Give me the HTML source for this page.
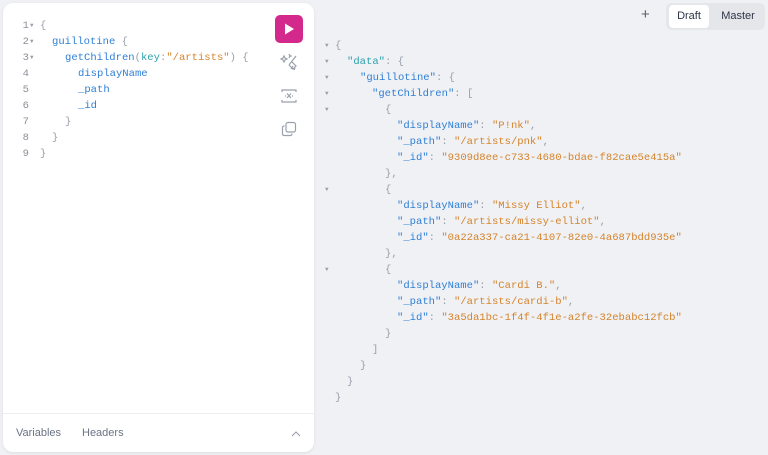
<!DOCTYPE html>
<html><head><style>
*{margin:0;padding:0;box-sizing:border-box}
body{width:768px;height:455px;background:#f0f1f4;font-family:"Liberation Sans",sans-serif;position:relative;overflow:hidden}
.panel{position:absolute;left:3px;top:3px;width:311px;height:449px;background:#fff;border-radius:10px;box-shadow:0 1px 3px rgba(0,0,0,.08)}
.code{position:absolute;font-family:"Liberation Mono",monospace;font-size:10.55px;line-height:16px;white-space:pre}
.l{position:absolute;left:0}
.n{color:#8a8f9a;position:absolute;text-align:right;width:12px}
.a{color:#9aa0ab;font-size:6px;position:absolute}
.p{color:#9aa0ab}
.f{color:#2f7fd5}
.k{color:#2aa1ad}
.s{color:#d4842c}
.foot{position:absolute;left:0;right:0;top:410px;border-top:1px solid #eceef1}
.foot span{position:absolute;top:13px;font-size:11px;color:#6b7385}
.run{position:absolute;left:272px;top:12px;width:28px;height:28px;background:#d3298c;border-radius:5px}
.btns{position:absolute;left:666px;top:3px;width:99px;height:27px;background:#e4e6ea;border-radius:6px}
.btns div{position:absolute;top:2px;height:23px;font-size:11px;line-height:23px;color:#2d3547;text-align:center}
</style></head><body>
<div class="panel">
  <div class="code" style="left:0;top:15px">
    <div class="l" style="top:0"><span class="n" style="left:14px">1</span><span class="a" style="left:27px">▼</span><span class="p" style="position:absolute;left:37px">{</span></div>
    <div class="l" style="top:16px"><span class="n" style="left:14px">2</span><span class="a" style="left:27px">▼</span><span class="f" style="position:absolute;left:49px">guillotine <span class="p">{</span></span></div>
    <div class="l" style="top:32px"><span class="n" style="left:14px">3</span><span class="a" style="left:27px">▼</span><span style="position:absolute;left:62px"><span class="f">getChildren</span><span class="p">(</span><span class="k">key</span><span class="p">:</span><span class="s">"/artists"</span><span class="p">) {</span></span></div>
    <div class="l" style="top:48px"><span class="n" style="left:14px">4</span><span class="f" style="position:absolute;left:75px">displayName</span></div>
    <div class="l" style="top:64px"><span class="n" style="left:14px">5</span><span class="f" style="position:absolute;left:75px">_path</span></div>
    <div class="l" style="top:80px"><span class="n" style="left:14px">6</span><span class="f" style="position:absolute;left:75px">_id</span></div>
    <div class="l" style="top:96px"><span class="n" style="left:14px">7</span><span class="p" style="position:absolute;left:62px">}</span></div>
    <div class="l" style="top:112px"><span class="n" style="left:14px">8</span><span class="p" style="position:absolute;left:49px">}</span></div>
    <div class="l" style="top:128px"><span class="n" style="left:14px">9</span><span class="p" style="position:absolute;left:37px">}</span></div>
  </div>
  <div class="run"><svg width="28" height="28"><path d="M10 8.5 L19 14 L10 19.5Z" fill="#fff"/></svg></div>
  <svg style="position:absolute;left:277px;top:50px" width="18" height="18" fill="none" stroke="#9aa0ab" stroke-width="1.2"><path d="M16 3 L9 12 M12 9 L16 13 L13 16 L9 12 M11 16 L13 13 M15 15 L14 17"/><path d="M4 3 L5 5 L7 6 L5 7 L4 9 L3 7 L1 6 L3 5Z M9 1 L9.6 2.4 L11 3 L9.6 3.6 L9 5"/></svg>
  <svg style="position:absolute;left:278px;top:85px" width="16" height="16" fill="none" stroke="#9aa0ab" stroke-width="1.2"><path d="M1 4 V2 H15 V4 M1 12 V14 H15 V12 M6 5.5 L10 10 M10 5.5 L6 10 M4 8h1 M11 8h1"/></svg>
  <svg style="position:absolute;left:278px;top:118px" width="16" height="16" fill="none" stroke="#9aa0ab" stroke-width="1.2"><rect x="5" y="1.5" width="9.5" height="9.5" rx="2"/><path d="M3.5 5 H3 A1.5 1.5 0 0 0 1.5 6.5 V13 A1.5 1.5 0 0 0 3 14.5 H9.5 A1.5 1.5 0 0 0 11 13 V12.5"/></svg>
  <div class="foot"><span style="left:13px">Variables</span><span style="left:79px">Headers</span>
    <svg style="position:absolute;left:288px;top:16px" width="10" height="8" fill="none" stroke="#9aa0ab" stroke-width="1.1"><path d="M1 6 L5 2 L9 6"/></svg></div>
</div>
<div style="position:absolute;left:641px;top:6px;font-size:15px;color:#5a6070">+</div>
<div class="btns"><div style="left:3px;width:40px;background:#fff;border-radius:4px">Draft</div><div style="left:48px;width:48px">Master</div></div>
<div class="code" style="left:0;top:38px">
  <div class="l" style="top:0"><span class="a" style="left:325px">▼</span><span class="p" style="position:absolute;left:335px">{</span></div>
  <div class="l" style="top:16px"><span class="a" style="left:325px">▼</span><span style="position:absolute;left:347px"><span class="k">"data"</span><span class="p">: {</span></span></div>
  <div class="l" style="top:32px"><span class="a" style="left:325px">▼</span><span style="position:absolute;left:360px"><span class="f">"guillotine"</span><span class="p">: {</span></span></div>
  <div class="l" style="top:48px"><span class="a" style="left:325px">▼</span><span style="position:absolute;left:372px"><span class="f">"getChildren"</span><span class="p">: [</span></span></div>
  <div class="l" style="top:64px"><span class="a" style="left:325px">▼</span><span class="p" style="position:absolute;left:385px">{</span></div>
  <div class="l" style="top:80px"><span style="position:absolute;left:397px"><span class="f">"displayName"</span><span class="p">: </span><span class="s">"P!nk"</span><span class="p">,</span></span></div>
  <div class="l" style="top:96px"><span style="position:absolute;left:397px"><span class="f">"_path"</span><span class="p">: </span><span class="s">"/artists/pnk"</span><span class="p">,</span></span></div>
  <div class="l" style="top:112px"><span style="position:absolute;left:397px"><span class="f">"_id"</span><span class="p">: </span><span class="s">"9309d8ee-c733-4680-bdae-f82cae5e415a"</span></span></div>
  <div class="l" style="top:128px"><span class="p" style="position:absolute;left:385px">},</span></div>
  <div class="l" style="top:144px"><span class="a" style="left:325px">▼</span><span class="p" style="position:absolute;left:385px">{</span></div>
  <div class="l" style="top:160px"><span style="position:absolute;left:397px"><span class="f">"displayName"</span><span class="p">: </span><span class="s">"Missy Elliot"</span><span class="p">,</span></span></div>
  <div class="l" style="top:176px"><span style="position:absolute;left:397px"><span class="f">"_path"</span><span class="p">: </span><span class="s">"/artists/missy-elliot"</span><span class="p">,</span></span></div>
  <div class="l" style="top:192px"><span style="position:absolute;left:397px"><span class="f">"_id"</span><span class="p">: </span><span class="s">"0a22a337-ca21-4107-82e0-4a687bdd935e"</span></span></div>
  <div class="l" style="top:208px"><span class="p" style="position:absolute;left:385px">},</span></div>
  <div class="l" style="top:224px"><span class="a" style="left:325px">▼</span><span class="p" style="position:absolute;left:385px">{</span></div>
  <div class="l" style="top:240px"><span style="position:absolute;left:397px"><span class="f">"displayName"</span><span class="p">: </span><span class="s">"Cardi B."</span><span class="p">,</span></span></div>
  <div class="l" style="top:256px"><span style="position:absolute;left:397px"><span class="f">"_path"</span><span class="p">: </span><span class="s">"/artists/cardi-b"</span><span class="p">,</span></span></div>
  <div class="l" style="top:272px"><span style="position:absolute;left:397px"><span class="f">"_id"</span><span class="p">: </span><span class="s">"3a5da1bc-1f4f-4f1e-a2fe-32ebabc12fcb"</span></span></div>
  <div class="l" style="top:288px"><span class="p" style="position:absolute;left:385px">}</span></div>
  <div class="l" style="top:304px"><span class="p" style="position:absolute;left:372px">]</span></div>
  <div class="l" style="top:320px"><span class="p" style="position:absolute;left:360px">}</span></div>
  <div class="l" style="top:336px"><span class="p" style="position:absolute;left:347px">}</span></div>
  <div class="l" style="top:352px"><span class="p" style="position:absolute;left:335px">}</span></div>
</div>
</body></html>
